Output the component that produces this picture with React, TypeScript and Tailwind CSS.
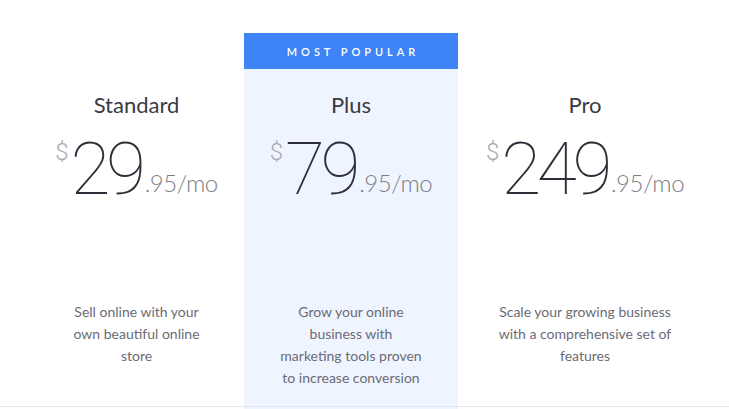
import React from 'react';

interface Plan {
  name: string;
  dollars: string;
  desc: React.ReactNode;
  popular?: boolean;
}

const PLANS: Plan[] = [
  {
    name: 'Standard',
    dollars: '29',
    desc: (
      <>
        Sell online with your
        <br />
        own beautiful online
        <br />
        store
      </>
    ),
  },
  {
    name: 'Plus',
    dollars: '79',
    popular: true,
    desc: (
      <>
        Grow your online
        <br />
        business with
        <br />
        marketing tools proven
        <br />
        to increase conversion
      </>
    ),
  },
  {
    name: 'Pro',
    dollars: '249',
    desc: (
      <>
        Scale your growing business
        <br />
        with a comprehensive set of
        <br />
        features
      </>
    ),
  },
];

const PlanColumn: React.FC<{ plan: Plan; className?: string }> = ({ plan, className = '' }) => (
  <div className={`flex flex-col items-center ${plan.popular ? 'bg-[#eff5ff]' : ''} ${className}`}>
    <div className={`h-[36px] w-full flex items-center justify-center ${plan.popular ? 'bg-[#3e84f6]' : ''}`}>
      {plan.popular && (
        <span className="text-white text-[11px] font-semibold tracking-[0.36em] pl-[0.36em] leading-none">
          MOST POPULAR
        </span>
      )}
    </div>
    <h2 className="mt-[22px] text-[22px] leading-[28px] text-[#3a3a44] font-normal">{plan.name}</h2>
    <div className="mt-[12px] h-[66px] flex items-end text-[#2e2e38]">
      <span className="self-start mt-[9px] mr-[2px] font-['Roboto',sans-serif] text-[24px] leading-none font-light text-[#a8a8b0]">
        $
      </span>
      <span className="font-['Roboto',sans-serif] text-[73px] leading-none font-thin tracking-[-0.06em] mb-[-9px]">
        {plan.dollars}
      </span>
      <span className="ml-[3px] mb-[2px] text-[24px] leading-none font-light tracking-[-0.02em] text-[#7d7d87]">
        .95/mo
      </span>
    </div>
    <p className="mt-[104px] text-[14px] leading-[22px] text-[#6b6b76] text-center">{plan.desc}</p>
  </div>
);

const App: React.FC = () => {
  return (
    <div className="relative h-[409px] w-[729px] overflow-hidden bg-white font-['Lato','Liberation_Sans',sans-serif]">
      <div className="flex h-full pt-[33px] pl-[29px]">
        <PlanColumn plan={PLANS[0]} className="w-[215px]" />
        <PlanColumn plan={PLANS[1]} className="w-[214px]" />
        <PlanColumn plan={PLANS[2]} className="w-[214px] ml-[20px]" />
      </div>
      <div className="absolute left-0 right-0 top-[406px] h-px bg-[#e4e6eb]" />
    </div>
  );
};

export default App;
